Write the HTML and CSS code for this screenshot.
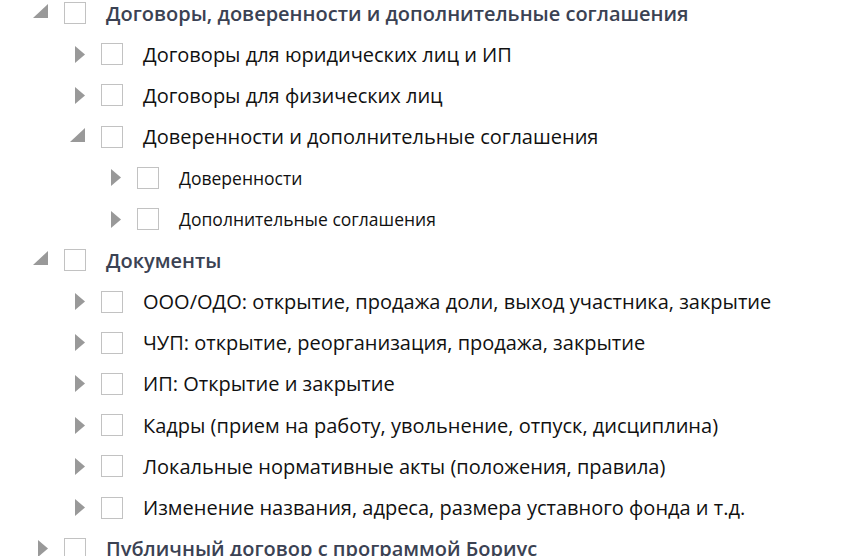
FILE: index.html
```html
<!DOCTYPE html>
<html lang="ru">
<head>
<meta charset="utf-8">
<title>Дерево документов</title>
<link rel="stylesheet" href="styles.css">
</head>
<body>
<ul class="tree">
  <li class="row l1 open"><span class="tog"><svg width="15" height="14" viewBox="0 0 15 14"><polygon points="15,0 15,14 0,14" fill="#999"/></svg></span><span class="cb"></span><span class="lbl">Договоры, доверенности и дополнительные соглашения</span></li>
  <li class="row l2"><span class="tog"><svg class="arr" width="10" height="17" viewBox="0 0 10 17"><polygon points="0,0 10,8.5 0,17" fill="#999"/></svg></span><span class="cb"></span><span class="lbl">Договоры для юридических лиц и ИП</span></li>
  <li class="row l2"><span class="tog"><svg class="arr" width="10" height="17" viewBox="0 0 10 17"><polygon points="0,0 10,8.5 0,17" fill="#999"/></svg></span><span class="cb"></span><span class="lbl">Договоры для физических лиц</span></li>
  <li class="row l2 open"><span class="tog"><svg width="15" height="14" viewBox="0 0 15 14"><polygon points="15,0 15,14 0,14" fill="#999"/></svg></span><span class="cb"></span><span class="lbl">Доверенности и дополнительные соглашения</span></li>
  <li class="row l3"><span class="tog"><svg class="arr" width="10" height="17" viewBox="0 0 10 17"><polygon points="0,0 10,8.5 0,17" fill="#999"/></svg></span><span class="cb"></span><span class="lbl">Доверенности</span></li>
  <li class="row l3"><span class="tog"><svg class="arr" width="10" height="17" viewBox="0 0 10 17"><polygon points="0,0 10,8.5 0,17" fill="#999"/></svg></span><span class="cb"></span><span class="lbl">Дополнительные соглашения</span></li>
  <li class="row l1 open"><span class="tog"><svg width="15" height="14" viewBox="0 0 15 14"><polygon points="15,0 15,14 0,14" fill="#999"/></svg></span><span class="cb"></span><span class="lbl">Документы</span></li>
  <li class="row l2"><span class="tog"><svg class="arr" width="10" height="17" viewBox="0 0 10 17"><polygon points="0,0 10,8.5 0,17" fill="#999"/></svg></span><span class="cb"></span><span class="lbl">ООО/ОДО: открытие, продажа доли, выход участника, закрытие</span></li>
  <li class="row l2"><span class="tog"><svg class="arr" width="10" height="17" viewBox="0 0 10 17"><polygon points="0,0 10,8.5 0,17" fill="#999"/></svg></span><span class="cb"></span><span class="lbl">ЧУП: открытие, реорганизация, продажа, закрытие</span></li>
  <li class="row l2"><span class="tog"><svg class="arr" width="10" height="17" viewBox="0 0 10 17"><polygon points="0,0 10,8.5 0,17" fill="#999"/></svg></span><span class="cb"></span><span class="lbl">ИП: Открытие и закрытие</span></li>
  <li class="row l2"><span class="tog"><svg class="arr" width="10" height="17" viewBox="0 0 10 17"><polygon points="0,0 10,8.5 0,17" fill="#999"/></svg></span><span class="cb"></span><span class="lbl">Кадры (прием на работу, увольнение, отпуск, дисциплина)</span></li>
  <li class="row l2"><span class="tog"><svg class="arr" width="10" height="17" viewBox="0 0 10 17"><polygon points="0,0 10,8.5 0,17" fill="#999"/></svg></span><span class="cb"></span><span class="lbl">Локальные нормативные акты (положения, правила)</span></li>
  <li class="row l2"><span class="tog"><svg class="arr" width="10" height="17" viewBox="0 0 10 17"><polygon points="0,0 10,8.5 0,17" fill="#999"/></svg></span><span class="cb"></span><span class="lbl">Изменение названия, адреса, размера уставного фонда и т.д.</span></li>
  <li class="row l1"><span class="tog"><svg class="arr" width="10" height="17" viewBox="0 0 10 17"><polygon points="0,0 10,8.5 0,17" fill="#999"/></svg></span><span class="cb"></span><span class="lbl">Публичный договор с программой Бориус</span></li>
</ul>
</body>
</html>
```

FILE: styles.css
```css
html, body {
  margin: 0;
  padding: 0;
  background: #fff;
  overflow: hidden;
}
body {
  font-family: "Open Sans", "Noto Sans", sans-serif;
}
.tree {
  list-style: none;
  margin: -7.6px 0 0 0;
  padding: 0;
}
.row {
  display: flex;
  align-items: center;
  height: 41.23px;
  white-space: nowrap;
}
.l1 { padding-left: 32px; }
.l2 { padding-left: 69px; }
.l3 { padding-left: 105px; }
.tog {
  width: 20px;
  height: 22px;
  flex: none;
  display: flex;
  align-items: center;
  margin-right: 12px;
}
.open .tog svg { margin: -4px 0 0 1px; }
.tog .arr { margin-left: 6px; }
.cb {
  width: 20px;
  height: 20px;
  flex: none;
  border: 1px solid #c2c2c2;
  background: #fff;
  margin-right: 20px;
}
.lbl {
  font-size: 20px;
  color: #111;
}
.l1 .lbl {
  font-weight: 600;
  color: #3b4253;
}
.l3 .lbl {
  font-size: 17.5px;
}
```
